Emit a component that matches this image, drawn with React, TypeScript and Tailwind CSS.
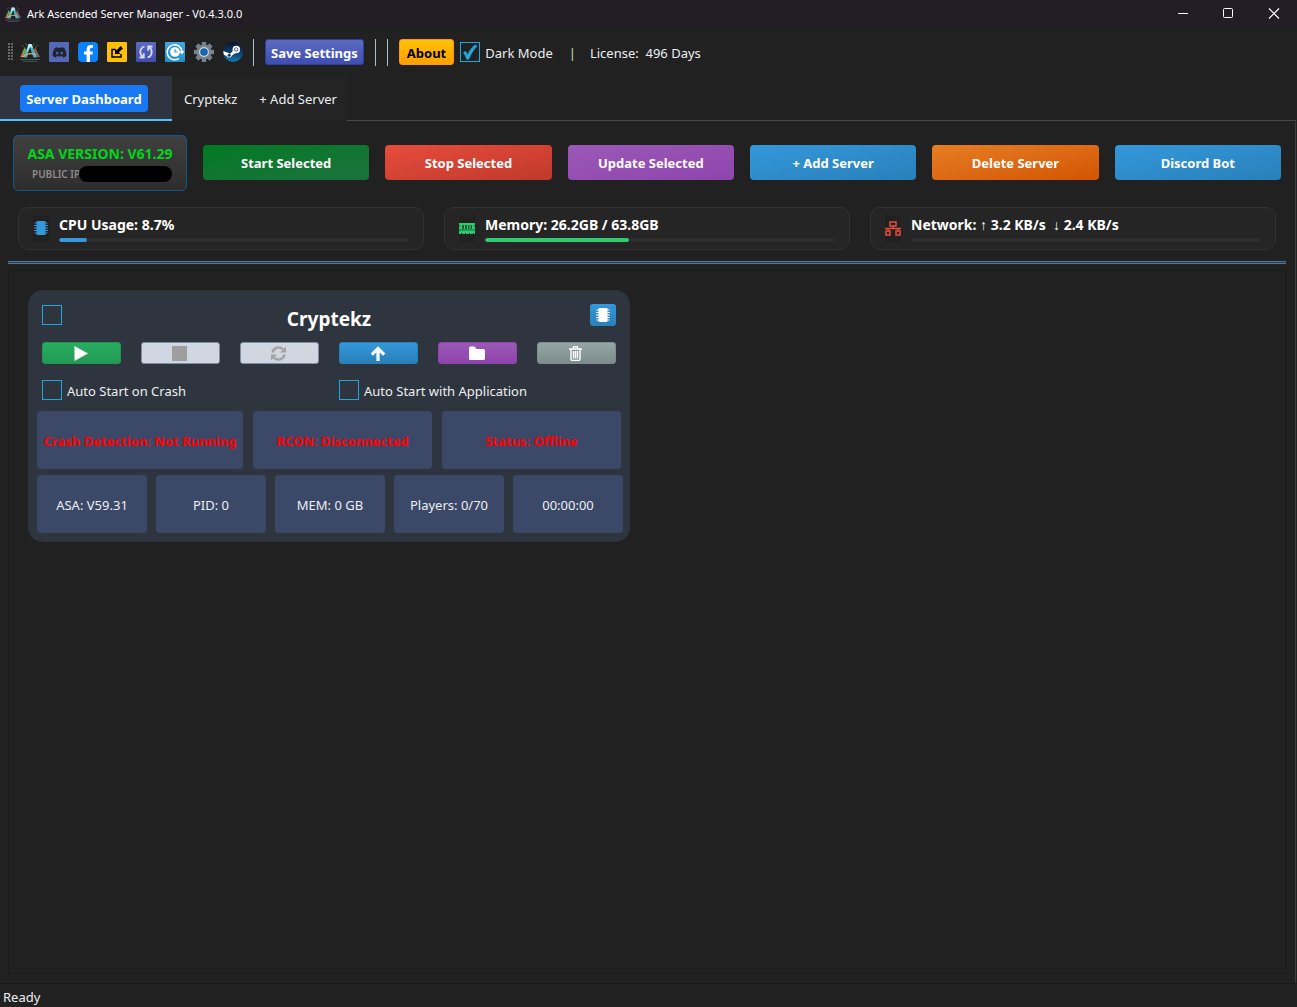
import { useState } from 'react';
import type { ReactNode } from 'react';
import clsx from 'clsx';
import { FaCog, FaDiscord, FaFacebookF } from 'react-icons/fa';

const actions = [
    { label: 'Start Selected', bg: 'bg-linear-to-br from-[#007a22] to-[#1a713c]' },
    { label: 'Stop Selected', bg: 'bg-linear-to-br from-[#e74c3c] to-[#c0392b]' },
    { label: 'Update Selected', bg: 'bg-linear-to-br from-[#9b59b6] to-[#8e44ad]' },
    { label: '+ Add Server', bg: 'bg-linear-to-br from-[#3498db] to-[#2980b9]' },
    { label: 'Delete Server', bg: 'bg-linear-to-br from-[#e67e22] to-[#d35400]' },
    { label: 'Discord Bot', bg: 'bg-linear-to-br from-[#3498db] to-[#2980b9]' },
];

const details = ['ASA: V59.31', 'PID: 0', 'MEM: 0 GB', 'Players: 0/70', '00:00:00'];

export default function App() {
    return (
        <div className="flex min-h-screen flex-col bg-[#212121] font-['Noto_Sans',sans-serif] text-[13px] leading-5 text-[#eceff1]">
            <TitleBar />
            <Toolbar />
            <Tabs />
            <main className="mr-px flex flex-1 flex-col border-r border-[#3c3c3c] pr-[9px] pl-2">
                <ActionRow />
                <UsageRow />
                <section className="mt-1.5 mb-[9px] flex-1 border border-[#1a1a1a] p-[19px]">
                    <ServerCard />
                </section>
            </main>
            <footer className="flex h-6 items-center border-t border-[#191919] px-[3px] pt-0.5">Ready</footer>
        </div>
    );
}

function TitleBar() {
    return (
        <header className="flex h-7 items-center justify-between bg-[#231e26] pl-[5px] text-[11px] text-white">
            <div className="flex items-center gap-1.5">
                <ArkIcon className="size-4" />
                <h1>Ark Ascended Server Manager - V0.4.3.0.0</h1>
            </div>
            <div className="flex h-full">
                <button aria-label="Minimize" className="grid w-[45px] place-items-center">
                    <svg className="size-3" viewBox="0 0 12 12" stroke="currentColor"><path d="M1 5.500h10" /></svg>
                </button>
                <button aria-label="Maximize" className="grid w-[46px] place-items-center">
                    <svg className="size-3" viewBox="0 0 12 12" fill="none" stroke="currentColor"><rect x="1.500" y=".5" width="9" height="9" rx="1" /></svg>
                </button>
                <button aria-label="Close" className="grid w-[46px] place-items-center">
                    <svg className="size-3" viewBox="0 0 12 12" stroke="currentColor" strokeWidth="1.200"><path d="M1 .5l10 10M11 .5l-10 10" /></svg>
                </button>
            </div>
        </header>
    );
}

function Toolbar() {
    const [dark, setDark] = useState(true);

    return (
        <div className="flex h-12 items-center pl-2">
            <svg className="mr-[7px] h-[18px] w-[5px]" viewBox="0 0 5 18" fill="#686868">
                {[0, 3, 6, 9, 12, 15].map((y) => (
                    <path key={y} d={`M0 ${y}h2v2H0zM3 ${y}h2v2H3z`} />
                ))}
            </svg>
            <nav className="flex items-center gap-[9px]">
                <ToolButton label="Ark">
                    <ArkIcon className="size-5" />
                </ToolButton>
                <ToolButton label="Discord" className="rounded-[1px] bg-[#5568b8] text-[#1f2430]">
                    <FaDiscord size={15} />
                </ToolButton>
                <ToolButton label="Facebook" className="items-end! rounded-sm bg-[#0a82ff] text-white">
                    <FaFacebookF size={17} />
                </ToolButton>
                <ToolButton label="Import" className="rounded-[1px] bg-[#ffc107] text-black">
                    <svg className="size-5" viewBox="0 0 20 20">
                        <path d="M8 7.500H5V15h9v-3" fill="none" stroke="currentColor" strokeWidth="1.500" />
                        <path d="M8 12V6.500l1.700 1.700L13.500 4l2.500 2.500-4.200 3.800L13.500 12z" fill="currentColor" />
                    </svg>
                </ToolButton>
                <ToolButton label="Refresh" className="rounded-[1px] bg-linear-to-b from-[#5c6bc0] to-[#3f4da8] text-[#d5d9f2]">
                    <svg className="size-5" viewBox="0 0 20 20" fill="none" stroke="currentColor" strokeWidth="1.800">
                        <path d="M8.500 4.500C3.500 6 3 12 7 15.200M3.500 15.500h4.300v-4.300M11.500 15.500c5-1.500 5.500-7.500 1.500-10.700M16.500 4.500h-4.300v4.300" />
                    </svg>
                </ToolButton>
                <ToolButton label="Schedule" className="rounded-[1px] bg-linear-to-b from-[#42a5e5] to-[#258fc5] text-white">
                    <svg className="size-5" viewBox="0 0 20 20" fill="none" stroke="currentColor" strokeWidth="1.500">
                        <path d="M14 16.300A7.500 7.500 0 1 1 17 9" />
                        <path d="M14 9h5.500l-2.700 3.500z" fill="currentColor" stroke="none" />
                        <circle cx="10" cy="10" r="4.800" fill="currentColor" stroke="none" />
                        <path d="M10 7v3h2.500" stroke="#2f9ad5" strokeWidth="1.200" />
                    </svg>
                </ToolButton>
                <ToolButton label="Settings">
                    <svg className="size-5" viewBox="0 0 20 20" fill="#78838c">
                        {[0, 45, 90, 135].map((angle) => (
                            <rect key={angle} x="7.800" width="4.400" height="20" rx=".6" transform={`rotate(${angle} 10 10)`} />
                        ))}
                        <circle cx="10" cy="10" r="7.500" />
                        <circle cx="10" cy="10" r="5" fill="#cfd8dc" />
                        <circle cx="10" cy="10" r="3.800" fill="#1566b0" />
                    </svg>
                </ToolButton>
                <ToolButton label="Steam" className="overflow-hidden rounded-full bg-linear-to-b from-[#0b1330] via-[#0c3a6b] to-[#137cb0] text-white">
                    <svg className="size-5" viewBox="0 0 20 20">
                        <path d="M.3 9l7 2.700 3.500-4 2 3.300-3.800 2.500a3 3 0 0 1-5.500.5L.6 12.500z" fill="currentColor" />
                        <circle cx="6.200" cy="13.300" r="1.500" fill="#0c3a6b" />
                        <circle cx="13.300" cy="7.500" r="2.900" fill="#10284d" stroke="currentColor" strokeWidth="1.700" />
                        <circle cx="13.300" cy="7.500" r="1.400" fill="#dfe6ee" />
                    </svg>
                </ToolButton>
            </nav>
            <Separator className="ml-2.5" />
            <button className="ml-[11px] h-[26px] rounded-[3px] border border-[#303f9f] bg-linear-to-b from-[#5c6bc0] to-[#3f4db0] px-[5px] pt-0.5 font-bold text-white">
                Save Settings
            </button>
            <Separator className="ml-[11px]" />
            <Separator className="ml-[11px]" />
            <button className="ml-[11px] h-[26px] rounded-[3px] border border-[#ff9800] bg-linear-to-b from-[#ffc107] to-[#ffa000] px-[7px] pt-0.5 font-bold text-black">
                About
            </button>
            <label className="ml-1.5 flex items-center gap-[5px]">
                <Check checked={dark} onChange={setDark} />
                <span className="pt-0.5">Dark Mode</span>
            </label>
            <span className="ml-4 pt-0.5 text-[#c5e1a5]">|</span>
            <span className="ml-3.5 pt-0.5 whitespace-pre">License:  496 Days</span>
        </div>
    );
}

function ToolButton({ label, className, children }: { label: string; className?: string; children: ReactNode }) {
    return (
        <button aria-label={label} className={clsx('flex size-5 items-center justify-center', className)}>
            {children}
        </button>
    );
}

function Separator({ className }: { className: string }) {
    return <span className={clsx('h-[27px] w-px bg-[#b0bec5]', className)} />;
}

function Check({ checked, onChange }: { checked: boolean; onChange: (value: boolean) => void }) {
    return (
        <span className="relative block size-5 shrink-0">
            <input
                type="checkbox"
                checked={checked}
                onChange={(e) => onChange(e.target.checked)}
                className="block size-5 appearance-none border border-[#1fa8dc]"
            />
            {checked && (
                <svg className="pointer-events-none absolute inset-0 size-5" viewBox="0 0 20 20" fill="#24a3d8">
                    <path d="M3 10.500l2.500-1.500c1 1 1.500 2 2 3.200C9.500 8 12 5 15 2.500L17.500 4C13.500 8 11 12 9 17.500H6.500C5.500 14.500 4.500 12.500 3 10.500z" />
                </svg>
            )}
        </span>
    );
}

function Tabs() {
    return (
        <nav className="mr-px flex h-[45px]">
            <button className="w-[172px] border-b-2 border-[#4fc3f7] bg-[#303340] pt-0.5 pr-1 text-white">
                <span className="inline-block rounded-[4px] bg-[#1877f2] px-1.5 pt-1 pb-[3px] font-bold">Server Dashboard</span>
            </button>
            <div className="flex bg-[#242424]">
                <button className="pr-2.5 pl-3">Cryptekz</button>
                <button className="pr-2.5 pl-3">+ Add Server</button>
            </div>
            <div className="flex-1 border-b border-[#484848]" />
        </nav>
    );
}

function ActionRow() {
    return (
        <div className="mt-3.5 flex items-start gap-4 px-[5px]">
            <div className="h-14 w-[174px] shrink-0 rounded-[5px] border border-[#0b5a8c] bg-linear-to-b from-[#404040] to-[#2d2d2d] pt-2 text-center">
                <p className="text-[14px] font-bold whitespace-nowrap text-[#00d619]">ASA VERSION: V61.29</p>
                <div className="flex items-center pl-[18px] text-[10px] font-semibold text-[#8c8c8c]">
                    PUBLIC IP
                    <span className="-ml-px mr-3.5 h-4 flex-1 rounded-full bg-black" />
                </div>
            </div>
            {actions.map((action) => (
                <button key={action.label} className={clsx('mt-2.5 h-[35px] flex-1 rounded-[4px] font-bold text-white', action.bg)}>
                    {action.label}
                </button>
            ))}
        </div>
    );
}

function UsageRow() {
    return (
        <>
            <div className="mt-4 mb-[11px] grid grid-cols-3 gap-5 px-2.5">
                <UsageCard label="CPU Usage: 8.7%" percent={8} bar="bg-[#3498db]" icon={<ChipIcon className="size-4 text-[#3498db]" />} />
                <UsageCard
                    label="Memory: 26.2GB / 63.8GB"
                    percent={41}
                    bar="bg-[#2ecc71]"
                    icon={
                        <svg className="size-4" viewBox="0 0 16 16" fill="#2ecc71">
                            <path d="M0 3h16v2l-1 1 1 1v2H0V7l1-1-1-1z" />
                            <path d="M0 9h16v2H0z" fill="#1f9a52" />
                            <path d="M0 11h16v3h-1v-1h-1v1h-3v-1h-1v1H7v-1H6v1H3v-1H2v1H0z" />
                            <path d="M3 5h2v4H3zM6 5h2v4H6zM9 5h1.500v4H9zM11.500 5H13v4h-1.500z" fill="#245c3b" />
                        </svg>
                    }
                />
                <UsageCard
                    label="Network: ↑ 3.2 KB/s  ↓ 2.4 KB/s"
                    percent={0}
                    bar="bg-[#e74c3c]"
                    icon={
                        <svg className="size-4" viewBox="0 0 16 16" fill="none" stroke="#e74c3c" strokeWidth="1.500">
                            <path d="M5 2h6v4H5zM1 11h4v4H1zM11 11h4v4h-4zM8 6v2.500M3 11V8.500M13 11V8.500M0 8.500h16" />
                        </svg>
                    }
                />
            </div>
            <div className="h-[3px] border-y border-[#53729c] bg-[#2c3d52]" />
        </>
    );
}

function UsageCard({ label, percent, bar, icon }: { label: string; percent: number; bar: string; icon: ReactNode }) {
    return (
        <div className="flex h-[43px] items-center gap-2.5 rounded-[10px] border border-[#323232] bg-[#252525] px-3.5">
            <div className="flex h-[27px] w-4 items-center bg-[#212121] pb-0.5">{icon}</div>
            <div className="flex-1 pb-px">
                <p className="text-[14px] font-bold whitespace-pre text-white">{label}</p>
                <div className="mt-[3px] h-1 overflow-hidden rounded-full bg-[#2d2d2d]">
                    <div className={clsx('h-full rounded-full', bar)} style={{ width: `${percent}%` }} />
                </div>
            </div>
        </div>
    );
}

function ServerCard() {
    const [selected, setSelected] = useState(false);
    const [onCrash, setOnCrash] = useState(false);
    const [withApp, setWithApp] = useState(false);

    return (
        <article className="max-w-[602px] rounded-[15px] bg-[#2f353f] p-[9px] pt-3.5">
            <div className="px-[5px]">
                <div className="flex h-7 items-start justify-between">
                    <label aria-label="Select Cryptekz" className="mt-px flex w-[26px]">
                        <Check checked={selected} onChange={setSelected} />
                    </label>
                    <h2 className="pt-[3px] text-[19px] leading-6 font-bold text-white">Cryptekz</h2>
                    <button aria-label="CPU" className="grid h-[22px] w-[26px] place-items-center rounded-[3px] bg-linear-to-b from-[#3498db] to-[#2980b9] text-white">
                        <ChipIcon className="size-4" />
                    </button>
                </div>
                <div className="mt-2.5 grid grid-cols-6 gap-5">
                    <IconButton label="Start" className="border-[#219653] bg-linear-to-b from-[#27ae60] to-[#239a55] text-white">
                        <path d="M1.500 1l13.500 7.500-13.500 7.500z" />
                    </IconButton>
                    <IconButton label="Stop" disabled className="border-[#7e8ea6] bg-[#d1d7e0] text-[#9e9e9e]">
                        <path d="M0 1h15v15H0z" />
                    </IconButton>
                    <IconButton label="Restart" disabled className="border-[#7e8ea6] bg-[#d1d7e0] text-[#a3a3a3]">
                        <path d="M1.500 7.500A6.200 6.200 0 0 1 12 4.300M13.500 9.500A6.200 6.200 0 0 1 3 12.700" fill="none" stroke="currentColor" strokeWidth="2.400" />
                        <path d="M15 1.500v6H9zM0 15.500v-6h6z" />
                    </IconButton>
                    <IconButton label="Update" className="border-[#2980b9] bg-linear-to-b from-[#3498db] to-[#2980b9] text-white">
                        <path d="M8 3v13M1.800 9.700L8 3.500l6.200 6.200" fill="none" stroke="currentColor" strokeWidth="3.200" />
                    </IconButton>
                    <IconButton label="Open folder" className="border-[#8e44ad] bg-linear-to-b from-[#9b59b6] to-[#8e44ad] text-white">
                        <path d="M0 3a1.500 1.500 0 0 1 1.500-1.500h4L7.500 4h7A1.500 1.500 0 0 1 16 5.500v8a1.500 1.500 0 0 1-1.500 1.500h-13A1.500 1.500 0 0 1 0 13.500z" />
                    </IconButton>
                    <IconButton label="Delete" className="border-[#7f8c8d] bg-linear-to-b from-[#95a5a6] to-[#7f8c8d] text-white">
                        <path d="M1 4h13M5 4l.8-2.300h3.400L10 4M3 4v10a1.500 1.500 0 0 0 1.500 1.500h6A1.500 1.500 0 0 0 12 14V4M5.500 6v7.500M7.500 6v7.500M9.500 6v7.500" fill="none" stroke="currentColor" strokeWidth="1.400" />
                    </IconButton>
                </div>
                <div className="mt-4 grid grid-cols-2 gap-5">
                    <label className="flex h-5 items-center gap-[5px]">
                        <Check checked={onCrash} onChange={setOnCrash} />
                        <span className="pt-0.5">Auto Start on Crash</span>
                    </label>
                    <label className="flex h-5 items-center gap-[5px]">
                        <Check checked={withApp} onChange={setWithApp} />
                        <span className="pt-0.5">Auto Start with Application</span>
                    </label>
                </div>
            </div>
            <div className="mt-[11px] grid grid-cols-[206fr_179fr_179fr] gap-2.5 font-bold text-[#ff0000]">
                <InfoTile>Crash Detection: Not Running</InfoTile>
                <InfoTile>RCON: Disconnected</InfoTile>
                <InfoTile>Status: Offline</InfoTile>
            </div>
            <div className="-mr-0.5 mt-1.5 grid grid-cols-5 gap-[9px]">
                {details.map((detail) => (
                    <InfoTile key={detail}>{detail}</InfoTile>
                ))}
            </div>
        </article>
    );
}

function InfoTile({ children }: { children: ReactNode }) {
    return <div className="flex h-[58px] items-center justify-center rounded-[4px] bg-[#3b4868] pt-0.5 whitespace-nowrap">{children}</div>;
}

function IconButton({ label, className, disabled, children }: { label: string; className: string; disabled?: boolean; children: ReactNode }) {
    return (
        <button aria-label={label} disabled={disabled} className={clsx('grid h-[22px] place-items-center rounded-[3px] border pr-0.5', className)}>
            <svg className="size-4" viewBox="0 0 16 16" fill="currentColor">{children}</svg>
        </button>
    );
}

function ChipIcon({ className }: { className: string }) {
    return (
        <svg className={className} viewBox="0 0 16 16" fill="currentColor">
            <rect x="3.500" y="1" width="9" height="14" rx="1" />
            <path d="M1.500 3h13M1 5.500h14M1 8h14M1 10.500h14M1.500 13h13" stroke="currentColor" strokeWidth="1" />
        </svg>
    );
}

function ArkIcon({ className }: { className: string }) {
    return (
        <svg className={className} viewBox="0 0 20 20" fill="none">
            <path d="M2 3l3 3M5.500 1l1.500 3M14.500 1L13 4M18 3l-3 3M0 17.500h20M3 19.300h14" stroke="#4a5358" strokeWidth="1" />
            <path d="M0 15l4.500-8.500L8 10l-2 5z" fill="#c4643c" />
            <path d="M4.500 5.500L6.500 8 3 13.500 2 11z" fill="#6fa843" />
            <path d="M20 15l-4.500-8.500L12 10l2 5z" fill="#5d6f7a" />
            <path d="M15.500 5.500l-2 2.500 4 5z" fill="#b4523a" />
            <path d="M8.500 2h3L17 15.500h-3.500L10 6l-3 9.500H3.500z" fill="#45adc4" />
            <path d="M8.500 2h3l1.500 4-3-1-3.500 6z" fill="#c4eef0" />
            <path d="M10 6l-2.500 6 4-1z" fill="#1d2a31" />
            <path d="M2 15c5-4 10-4 14-2" stroke="#e0b070" strokeWidth="1.200" />
        </svg>
    );
}
